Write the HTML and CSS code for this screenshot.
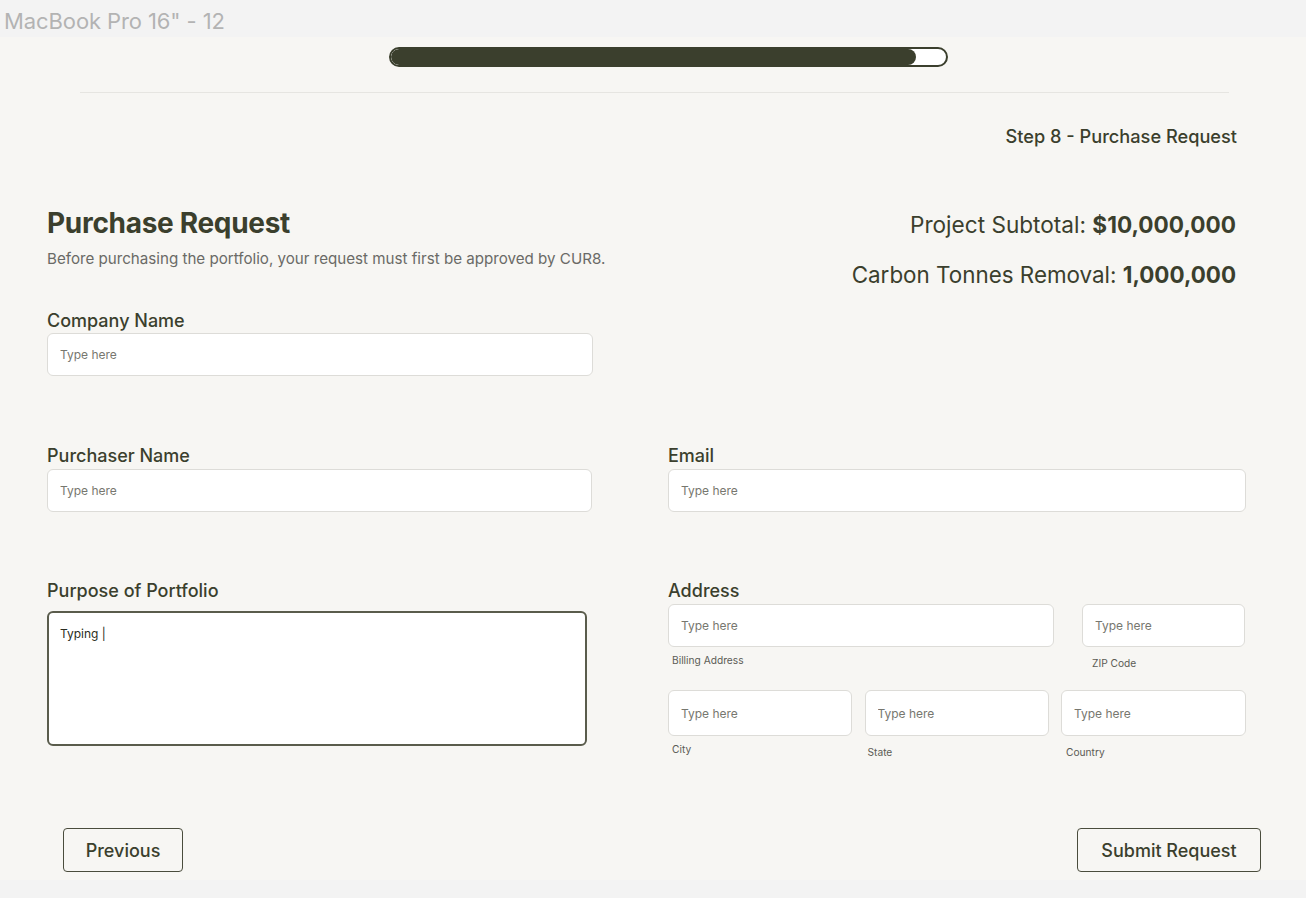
FILE: index.html
```html
<!DOCTYPE html>
<html lang="en">
<head>
<meta charset="utf-8">
<title>Purchase Request</title>
<link rel="stylesheet" href="styles.css">
</head>
<body>
<div class="frame-label">MacBook Pro 16" - 12</div>
<div class="frame">
  <div class="progress"><div class="progress-fill" style="width: 94.6%"></div></div>
  <div class="divider"></div>
  <div class="step">Step 8 - Purchase Request</div>

  <div class="header">
    <div class="intro">
      <h1 class="title">Purchase Request</h1>
      <p class="subtitle">Before purchasing the portfolio, your request must first be approved by CUR8.</p>
    </div>
    <div class="totals">
      <div class="total">Project Subtotal: <b>$10,000,000</b></div>
      <div class="total total-second">Carbon Tonnes Removal: <b>1,000,000</b></div>
    </div>
  </div>

  <div class="row row-first">
    <div class="field">
      <label class="label">Company Name</label>
      <input class="input" type="text" placeholder="Type here">
    </div>
  </div>

  <div class="row row-second">
    <div class="field">
      <label class="label">Purchaser Name</label>
      <input class="input input-narrow" type="text" placeholder="Type here">
    </div>
    <div class="field">
      <label class="label">Email</label>
      <input class="input" type="text" placeholder="Type here">
    </div>
  </div>

  <div class="row row-third">
    <div class="field">
      <label class="label">Purpose of Portfolio</label>
      <textarea class="textarea">Typing |</textarea>
    </div>
    <div class="field">
      <label class="label">Address</label>
      <div class="addr-top">
        <div class="sub">
          <input class="input" type="text" placeholder="Type here">
          <span class="caption cap-billing">Billing Address</span>
        </div>
        <div class="sub">
          <input class="input input-zip" type="text" placeholder="Type here">
          <span class="caption cap-zip">ZIP Code</span>
        </div>
      </div>
      <div class="addr-bottom">
        <div class="sub">
          <input class="input input-tall" type="text" placeholder="Type here">
          <span class="caption cap-city">City</span>
        </div>
        <div class="sub">
          <input class="input input-tall" type="text" placeholder="Type here">
          <span class="caption cap-state">State</span>
        </div>
        <div class="sub">
          <input class="input input-tall" type="text" placeholder="Type here">
          <span class="caption cap-country">Country</span>
        </div>
      </div>
    </div>
  </div>

  <div class="actions">
    <button class="btn btn-prev" type="button">Previous</button>
    <button class="btn btn-submit" type="button">Submit Request</button>
  </div>
</div>
</body>
</html>
```

FILE: styles.css
```css
* { box-sizing: border-box; }

html, body {
  margin: 0;
  padding: 0;
  background: #f3f3f3;
  font-family: Inter, "Liberation Sans", sans-serif;
  color: #3b3f2d;
}

.frame-label {
  height: 37px;
  padding-left: 4px;
  font-size: 22px;
  line-height: 42px;
  color: #b3b3b3;
  letter-spacing: -0.1px;
}

.frame {
  background: #f7f6f3;
  height: 843px;
  padding-top: 10px;
}

.progress {
  margin-left: 389px;
  width: 559px;
  height: 20px;
  border: 2px solid #3b3f2d;
  border-radius: 10px;
  background: #ffffff;
  overflow: hidden;
}

.progress-fill {
  height: 100%;
  background: #3b3f2d;
  border-radius: 10px;
}

.divider {
  margin: 25px 0 0 80px;
  width: 1149px;
  height: 1px;
  background: #e6e5e1;
}

.step {
  margin-top: 32px;
  padding-right: 69px;
  text-align: right;
  font-size: 18.2px;
  line-height: 22px;
  font-weight: 500;
}

.header {
  margin-top: 59px;
  display: flex;
  justify-content: space-between;
  align-items: flex-start;
  padding: 0 70px 0 47px;
}

.title {
  margin: 0;
  font-size: 28px;
  line-height: 34px;
  font-weight: 700;
  letter-spacing: -0.3px;
}

.subtitle {
  margin: 9px 0 0;
  font-size: 15.15px;
  line-height: 20px;
  color: #6a6a66;
}

.totals {
  padding-top: 5px;
  text-align: right;
}

.total {
  font-size: 22.6px;
  line-height: 28px;
  color: #3b3f2d;
}

.total-second { font-size: 22.4px; }

.total b { font-weight: 700; }

.total-second { margin-top: 22px; }

.row {
  display: grid;
  grid-template-columns: 546px 578px;
  column-gap: 75px;
  padding-left: 47px;
  align-items: start;
}

.row-first { margin-top: 23px; }
.row-second { margin-top: 71px; }
.row-third { margin-top: 70px; }

.field {
  display: flex;
  flex-direction: column;
}

.label {
  font-size: 18px;
  line-height: 18px;
  font-weight: 500;
  margin-bottom: 3px;
}

.row-second .label { margin-bottom: 4px; }

.input {
  width: 100%;
  height: 43px;
  border: 1px solid #dddcd8;
  border-radius: 6px;
  background: #ffffff;
  padding: 0 12px;
  font-family: inherit;
  font-size: 12px;
  color: #3b3f2d;
  outline: none;
}

.input::placeholder { color: #77776f; opacity: 1; }

.input-narrow { width: 545px; }

.textarea {
  margin-top: 7px;
  width: 540px;
  height: 135px;
  border: 2px solid #5a5c4c;
  border-radius: 6px;
  background: #ffffff;
  padding: 13px 11px;
  font-family: inherit;
  font-size: 12px;
  line-height: 16px;
  color: #2b2d22;
  resize: none;
  outline: none;
}

.row-third .label { margin-bottom: 4px; }

.addr-top {
  display: grid;
  grid-template-columns: 386px 163px;
  column-gap: 28px;
}

.addr-bottom {
  margin-top: 21px;
  display: grid;
  grid-template-columns: 184px 184px 185px;
  column-gap: 12.5px;
}

.sub {
  display: flex;
  flex-direction: column;
}

.input-tall { height: 46px; }

.caption {
  font-size: 10.2px;
  line-height: 12px;
  color: #5b5b55;
  margin-top: 7px;
}

.cap-billing { padding-left: 4px; }
.cap-zip { padding-left: 10px; margin-top: 10px; }
.cap-city { padding-left: 4px; }
.cap-state { padding-left: 3px; margin-top: 10px; }
.cap-country { padding-left: 5px; margin-top: 10px; }

.actions {
  margin-top: 70px;
  display: flex;
  justify-content: space-between;
  padding: 0 45px 0 63px;
}

.btn {
  height: 44px;
  border: 1.5px solid #4a4c3c;
  border-radius: 4px;
  background: transparent;
  font-family: inherit;
  font-size: 18px;
  font-weight: 500;
  color: #3b3f2d;
  cursor: pointer;
}

.btn-prev { width: 120px; }
.btn-submit { width: 184px; }
```
